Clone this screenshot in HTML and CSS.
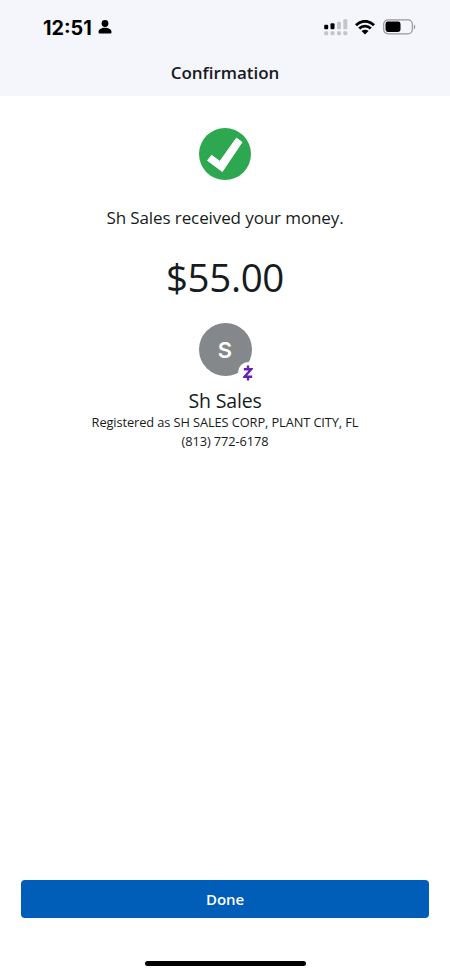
FILE: index.html
```html
<!DOCTYPE html>
<html lang="en">
<head>
<meta charset="utf-8">
<title>Confirmation</title>
<link rel="stylesheet" href="styles.css">
</head>
<body>
<div class="screen">
  <header class="top">
    <div class="status">
      <div class="clock">
        <span class="time">12:51</span>
        <svg class="person" width="14" height="14" viewBox="0 0 14 14"><circle cx="7" cy="3.5" r="3.4"/><path d="M.5 12c0-2.700 2.700-4.300 6.500-4.300s6.500 1.600 6.500 4.300c0 1-.5 1.600-1.400 1.600H1.900C1 13.600.5 13 .5 12z"/></svg>
      </div>
      <div class="indicators">
        <svg width="24" height="17" viewBox="0 0 24 17">
          <g fill="#c4c5c9"><rect x="13" y="2.700" width="4" height="7.600" rx="1"/><rect x="19.300" y=".3" width="4" height="10" rx="1"/><rect x=".2" y="12.300" width="4" height="4" rx="1.300"/><rect x="6.500" y="12.300" width="4" height="4" rx="1.300"/><rect x="13" y="12.300" width="4" height="4" rx="1.300"/><rect x="19.300" y="12.300" width="4" height="4" rx="1.300"/></g>
          <rect x=".2" y="5.700" width="4" height="4.600" rx="1"/><rect x="6.500" y="4.200" width="4" height="6.100" rx="1"/>
        </svg>
        <svg class="wifi" width="20" height="15" viewBox="0 0 20 15"><g fill="none" stroke="#000" stroke-width="2.800"><path d="M1 5.300C6-.1 14-.1 19 5.300"/><path d="M4.200 8.600c3.300-3.400 8.300-3.400 11.600 0"/></g><path d="M6.500 11c2-1.800 5-1.800 7 0L10 14.600z"/></svg>
        <svg class="battery" width="33" height="16" viewBox="0 0 33 16"><rect x=".7" y=".8" width="28.600" height="14" rx="4.300" fill="none" stroke="#96979b" stroke-width="1.200"/><rect x="2.500" y="2.600" width="15" height="10.400" rx="2.400"/><path d="M30.900 5.400c1.800.7 1.800 4.100 0 4.800z" fill="#96979b"/></svg>
      </div>
    </div>
    <h1 class="title">Confirmation</h1>
  </header>
  <main class="content">
    <svg class="check" width="52" height="52" viewBox="0 0 52 52"><circle cx="26" cy="26" r="26" fill="#2da850"/><path d="M12.600 27.300L20.900 33.400L37.400 10.200L43 14.200L23.300 43.500L8.600 32.500z" fill="#fff" stroke="#fff" stroke-width="1" stroke-linejoin="round"/></svg>
    <p class="message">Sh Sales received your money.</p>
    <p class="amount">$55.00</p>
    <div class="avatar">S
      <span class="badge"><svg width="10" height="16" viewBox="0 0 10 16" fill="none" stroke="#6423b4" stroke-width="2.400"><path d="M.8 4.200h7.400L1.600 11.700h7.600"/><path d="M5 .5v3.700M5 11.700v3.800"/></svg></span>
    </div>
    <h2 class="name">Sh Sales</h2>
    <p class="detail">Registered as SH SALES CORP, PLANT CITY, FL</p>
    <p class="detail">(813) 772-6178</p>
  </main>
  <footer class="bottom">
    <button class="done" type="button">Done</button>
    <div class="home-bar"></div>
  </footer>
</div>
</body>
</html>
```
FILE: styles.css
```css
* { box-sizing: border-box; margin: 0; padding: 0; }
body { background: #fff; color: #161b20; font-family: "Open Sans", "Noto Sans", sans-serif; }
svg { display: block; }
.screen { width: 450px; height: 975px; display: flex; flex-direction: column; overflow: hidden; }
.top { height: 96px; background: #f5f6fb; }
.status { height: 54px; padding: 0 34px 0 43px; display: flex; justify-content: space-between; }
.clock { display: flex; align-items: center; gap: 6px; height: 54px; color: #000; }
.time { font: 700 19.800px/24px Inter, sans-serif; padding-top: 1px; }
.indicators { display: flex; align-items: center; height: 54px; }
.wifi { margin-left: 7px; }
.battery { margin-left: 8px; }
.title { font-size: 17px; font-weight: 550; line-height: 24px; padding-top: 7px; text-align: center; letter-spacing: -.02px; }
.content { flex: 1; display: flex; flex-direction: column; align-items: center; padding-top: 32px; }
.message { font-size: 17px; line-height: 24px; margin-top: 26px; letter-spacing: -.1px; }
.amount { font-size: 38.500px; line-height: 54px; margin-top: 20px; letter-spacing: -.35px; }
.avatar { position: relative; width: 53px; height: 53px; margin-top: 19px; border-radius: 50%; background: #85888b; color: #fff; font: 600 22px/54px Inter, sans-serif; text-align: center; }
.badge { position: absolute; left: 39px; top: 39px; width: 21px; height: 21px; border-radius: 50%; background: #fff; display: flex; align-items: center; justify-content: center; }
.name { font-size: 19.500px; font-weight: 400; line-height: 28px; margin-top: 11px; letter-spacing: -.15px; }
.detail { font-size: 12.800px; line-height: 18.500px; letter-spacing: -.09px; position: relative; top: -2px; }
.bottom { padding: 0 21px; height: 95px; }
.done { display: block; width: 408px; height: 38px; border: 0; border-radius: 4px; background: #005eb8; color: #fff; font: 600 15px/38px "Open Sans", sans-serif; letter-spacing: -.1px; }
.home-bar { width: 161px; height: 5px; margin: 43px auto 0; border-radius: 3px; background: #000; }
```
